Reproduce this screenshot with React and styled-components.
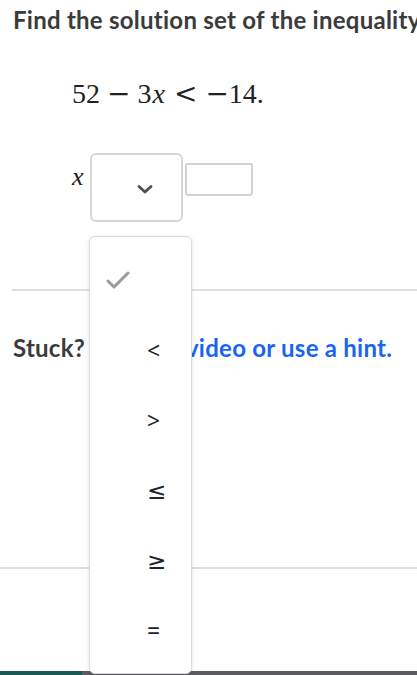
import React from 'react';
import styled, { createGlobalStyle } from 'styled-components';

const GlobalStyle = createGlobalStyle`
  html, body {
    margin: 0;
    padding: 0;
    background: #fff;
  }
  body {
    font-family: Lato, "Noto Sans", sans-serif;
    overflow: hidden;
  }
`;

const options = ['<', '>', '≤', '≥', '='];

const App = () => {
  return (
    <Page>
      <GlobalStyle />
      <Heading>Find the solution set of the inequality</Heading>

      <Equation>
        <span>52</span>
        <Op>−</Op>
        <span>3<i>x</i></span>
        <Op $rel>&lt;</Op>
        <span><Sign>−</Sign>14.</span>
      </Equation>

      <AnswerRow>
        <Var>x</Var>
        <SelectBox>
          <svg width="18" height="11" viewBox="0 0 18 11">
            <path d="M3 2.5 L9 8 L15 2.5" fill="none" stroke="#4d4f55" strokeWidth="2.8" strokeLinecap="round" strokeLinejoin="round" />
          </svg>
        </SelectBox>
        <NumberInput />
      </AnswerRow>

      <Divider $inset />

      <Stuck>
        Stuck? <HintLink href="#">Watch a video or use a hint.</HintLink>
      </Stuck>

      <Divider />

      <Footer>
        <Progress />
      </Footer>

      <Menu>
        <MenuItem>
          <Check>
            <svg width="24" height="20" viewBox="0 0 24 20">
              <path d="M2 11 L8 17 L22 3" fill="none" stroke="#9a9a9a" strokeWidth="3" strokeLinecap="round" strokeLinejoin="round" />
            </svg>
          </Check>
        </MenuItem>
        {options.map((o) => (
          <MenuItem key={o}>
            <Check />
            <OptionText>{o}</OptionText>
          </MenuItem>
        ))}
      </Menu>
    </Page>
  );
};

const Page = styled.div`
  position: relative;
  width: 417px;
  height: 675px;
  overflow: hidden;
  display: flex;
  flex-direction: column;
`;

const Heading = styled.h1`
  margin: 6px 0 0 13px;
  font-size: 24px;
  line-height: 28px;
  font-weight: 700;
  letter-spacing: 0.25px;
  color: #3b3b3b;
  white-space: nowrap;
`;

const Equation = styled.div`
  margin: 43px 0 0 72px;
  display: flex;
  align-items: baseline;
  font-family: "Liberation Serif", "DejaVu Serif", serif;
  font-size: 28px;
  line-height: 34px;
  color: #222;

  i {
    font-style: italic;
    padding-left: 1px;
  }
`;

const Op = styled.span`
  font-family: "DejaVu Serif", serif;
  font-weight: 300;
  margin: ${(p) => (p.$rel ? '0 8px 0 9px' : '0 7px')};
`;

const Sign = styled.span`
  font-family: "DejaVu Serif", serif;
  font-weight: 300;
`;

const AnswerRow = styled.div`
  margin: 42px 0 0 72px;
  display: flex;
  align-items: flex-start;
`;

const Var = styled.span`
  margin-top: 10px;
  font-family: "Liberation Serif", "DejaVu Serif", serif;
  font-style: italic;
  font-size: 26px;
  line-height: 28px;
  color: #222;
  width: 18px;
`;

const SelectBox = styled.div`
  box-sizing: border-box;
  width: 93px;
  height: 69px;
  border: 2px solid #d6d6d6;
  border-radius: 6px;
  display: flex;
  align-items: center;
  justify-content: center;
  padding-left: 16px;

  svg {
    margin-top: 4px;
  }
`;

const NumberInput = styled.div`
  box-sizing: border-box;
  margin: 10px 0 0 2px;
  width: 68px;
  height: 33px;
  border: 2px solid #d2d2d2;
  border-radius: 3px;
`;

const Divider = styled.div`
  margin: ${(p) => (p.$inset ? '67px 0 0 12px' : '0')};
  border-top: 2px solid #e0e0e0;
`;

const Stuck = styled.div`
  margin: 43px 0 0 13px;
  height: 233px;
  font-size: 24px;
  line-height: 28px;
  font-weight: 700;
  letter-spacing: 0.25px;
  color: #3b3b3b;
  white-space: nowrap;
`;

const HintLink = styled.a`
  color: #1865f2;
  text-decoration: none;
`;

const Footer = styled.div`
  margin-top: auto;
  height: 4px;
  background: #5b5b60;
  display: flex;
`;

const Progress = styled.div`
  width: 82px;
  background: #1b5a52;
`;

const Menu = styled.div`
  position: absolute;
  left: 89px;
  top: 236px;
  box-sizing: border-box;
  width: 103px;
  height: 438px;
  padding: 8px 0;
  background: #fff;
  border: 1px solid #dcdcdc;
  border-radius: 6px;
  box-shadow: 0 1px 4px rgba(0, 0, 0, 0.12);
  display: flex;
  flex-direction: column;
`;

const MenuItem = styled.div`
  height: 70px;
  display: flex;
  align-items: center;
  padding-left: 16px;
`;

const Check = styled.div`
  width: 41px;
  display: flex;
  align-items: center;
`;

const OptionText = styled.span`
  font-family: "Noto Sans", "DejaVu Sans", sans-serif;
  font-size: 23px;
  line-height: 26px;
  color: #21242c;
`;

export default App;
